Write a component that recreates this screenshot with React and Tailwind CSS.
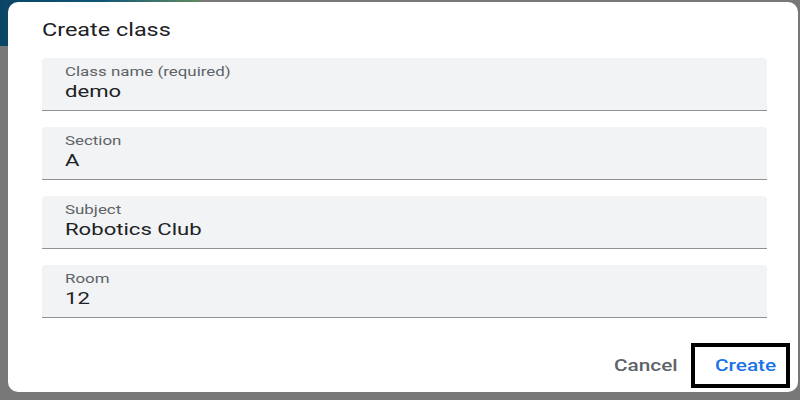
import React from 'react'

const fields = [
  { label: 'Class name (required)', value: 'demo' },
  { label: 'Section', value: 'A' },
  { label: 'Subject', value: 'Robotics Club' },
  { label: 'Room', value: '12' },
]

// the screenshot is stretched sideways, so text is widened to match
function Wide({ children, className = '' }) {
  return <span className={`inline-block origin-left scale-x-[1.3] whitespace-nowrap ${className}`}>{children}</span>
}

function Field({ label, value }) {
  return (
    <div className="h-[53px] rounded-t-[4px] bg-[#f1f3f4] border-b border-[#8f9194] pl-[23px] pt-[6px]">
      <div className="text-[13px] leading-[16px] text-[#5f6368]">
        <Wide>{label}</Wide>
      </div>
      <div className="text-[17px] leading-[22px] text-[#202124]">
        <Wide>{value}</Wide>
      </div>
    </div>
  )
}

export default function App() {
  return (
    <div className="relative w-[800px] h-[400px] overflow-hidden bg-[#787878] font-['Roboto',sans-serif]">
      {/* bit of the page behind the dialog */}
      <div className="absolute left-0 top-0 w-[200px] h-[46px] bg-gradient-to-r from-[#0b4566] via-[#0d5577] to-[#5f8a5a]"></div>

      <div className="relative ml-[8px] mt-[2px] w-[790px] h-[390px] rounded-[10px] bg-white flex flex-col">
        <div className="pl-[34px] pr-[31px] pt-[18px]">
          <h2 className="text-[18px] leading-[20px] text-[#202124]">
            <Wide>Create class</Wide>
          </h2>

          <div className="mt-[18px] flex flex-col gap-[16px]">
            {fields.map((f) => (
              <Field key={f.label} label={f.label} value={f.value} />
            ))}
          </div>
        </div>

        <div className="mt-auto flex justify-end items-center pr-[8px] pb-[4px]">
          <div className="w-[65px] mr-[12px] text-[16px] leading-[20px] font-medium text-[#5f6368]">
            <Wide>Cancel</Wide>
          </div>
          <div className="w-[99px] h-[45px] border-4 border-black pl-[20px] flex items-center text-[16px] leading-[20px] font-medium text-[#1a73e8]">
            <Wide>Create</Wide>
          </div>
        </div>
      </div>
    </div>
  )
}
